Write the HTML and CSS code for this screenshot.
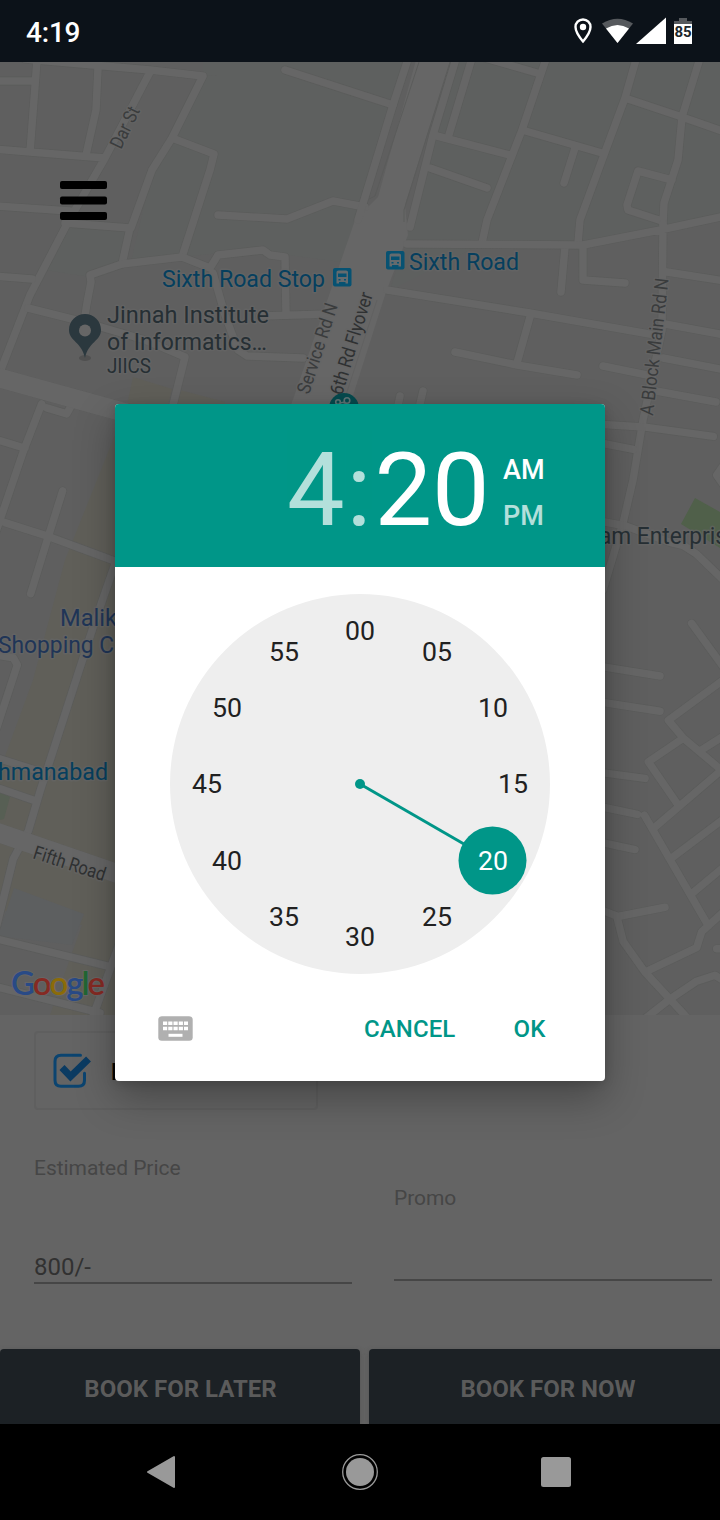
FILE: index.html
```html
<!DOCTYPE html>
<html lang="en">
<head>
<meta charset="utf-8">
<title>Book a ride</title>
<link rel="stylesheet" href="styles.css">
</head>
<body>
<div class="screen">
  <header class="status">
    <span class="status-time">4:19</span>
    <svg class="status-icons" width="124" height="30" viewBox="570 16 124 30">
      <path d="M583 19.500c-4.300 0-7.500 3.300-7.500 7.500 0 5.500 7.500 14.500 7.500 14.500s7.500-9 7.500-14.500c0-4.200-3.200-7.500-7.500-7.500z" fill="none" stroke="#fff" stroke-width="2.400"/>
      <circle cx="583" cy="27" r="3.200" fill="#fff"/>
      <path d="M602 23.500Q617.500 14 633 23.500L617.500 43z" fill="#56595d"/>
      <path d="M606 28.500Q617.500 21.500 629 28.500L617.500 43z" fill="#fff"/>
      <path d="M636 44L666 17.500V44z" fill="#fff"/>
      <path d="M679 18h8v3h5v4h-18v-4h5z" fill="#56595d"/>
      <path d="M674 24h18v20h-18z" fill="#fff"/>
      <text x="683" y="37" class="battery" text-anchor="middle" textLength="17">85</text>
    </svg>
  </header>

  <main class="map">
    <svg width="720" height="953" viewBox="0 62 720 953">
      <defs>
        <g id="roads" fill="none" stroke-linecap="round" stroke-linejoin="round">
          <path d="M25 59L150 70L203 76L172 138L152 170L131 228M37 60L30 152M-5 81H34M98 68L96 110L86 155M-5 149L30 152L105 158M150 72L105 158L68 222L30 295L-5 385M-5 206L70 211M65 223L130 228L122 264M172 138L214 154L210 170L182 257M218 215L287 219L333 201L365 207M285 70L393 105"/>
          <path d="M84 322L87 303L91 282L90 275L122 264L182 257L210 268L218 255L263 250L270 255L285 257L286 314M213 273L225 315L238 350L247 356L303 358M260 316L330 314M-5 276L32 279M28 308L84 322L145 340L185 357L173 405"/>
          <path d="M407 62L393 105L358 220M455 62L433 135L410 227M472 58L448 138M433 135L510 155M485 58L537 73M547 56L522 130L487 220L482 243M430 168L487 188M522 130L602 153M575 148L564 183M637 56L625 98L605 152L580 220L578 243M625 98L682 117L725 132M700 58L682 117L678 160L664 203L663 224M672 180L638 171L627 205L628 210L662 221"/>
          <path d="M407 244L583 245L660 230L725 216M583 245V280L625 283M565 247L561 292M663 224L662 330L643 420L633 480L623 523L603 590M387 290L530 313L655 335M530 317L517 363M455 352L517 365L577 375M603 366L647 375M667 272L725 281M665 324L725 335M663 358L725 370M656 391L716 402M423 391L415 425M400 396L395 420"/>
          <g transform="translate(0 400) scale(.3333 .3954)">
            <path d="M125 10L70 130L-15 340M-10 100L75 122M140 20L200 35L220 5M188 230L145 345L92 490M15 310L145 345L360 412M345 415L285 560L120 990L85 1090L40 1160L-10 1330M-10 645L40 652L52 670L-10 830M-10 905L140 945M-10 980L110 1015M-10 1363L330 1433M-10 1484L300 1550M360 1370L270 1580"/>
            <path class="wide" d="M-20 1090L360 1200"/>
          </g>
          <g transform="translate(600 400) scale(.3333 .3954)">
            <path d="M10 62L130 68L340 92M10 110L100 125M10 308L75 318L210 360L250 368L290 390L370 455M275 565L370 675M375 705L205 810L250 855L370 940M250 855L145 915L235 1025M370 850L305 885M370 932L165 1080M133 1050L325 1330M370 1060L220 1155M370 1182L280 1245M370 1295L305 1345L290 1385L135 1447M10 1292L50 1305L70 1370L135 1447L270 1570M10 675L180 698M10 765L180 787M10 943L135 957M10 1030L112 1048M10 1120L105 1137M50 1307L195 1283M130 1568L210 1515L290 1470L345 1455L370 1468M350 1388H370M375 160L350 190L375 220"/>
          </g>
          <path class="wide" d="M-15 374L130 414"/>
        </g>
      </defs>
      <path fill="#5f5f5f" d="M0 62h720v953H0z"/>
      <path fill="#5e605f" d="M203 76L150 180L131 262L250 250L340 262L358 220L410 62ZM203 76L410 62ZM203 76V62H410ZM455 62L410 227L385 290L407 245H583L720 217V62ZM68 225L130 228L122 264L90 277L45 270ZM403 247L480 245L390 290Z"/>
      <path fill="#605f59" d="M115 435L65 560L33 680L0 770V910L82 925L50 1015H115ZM133 377L172 389L168 405H127ZM180 390L225 402V405H176Z"/>
      <path fill="#5d5f60" d="M14 888L84 914L72 945L-2 936Z"/>
      <path fill="#575f54" d="M0 790L10 797L4 819L0 820Z"/>
      <path fill="#50604a" d="M695 498L720 512V548L681 524Z"/>
      <use href="#roads" class="road-edge"/>
      <path class="flyover" d="M416 60H451L405 205L408 235L386 292L350 405H291L355 220L378 197Z"/>
      <use href="#roads" class="road-fill"/>
      <path d="M419 62L375 196L369 199M450 62L404 210V222" fill="none" stroke="#5b5c5b"/>
      <path d="M377 300L343 404" stroke="#616161"/>

      <g class="labels">
        <text class="street" transform="translate(121 150) rotate(-64)" textLength="44" lengthAdjust="spacingAndGlyphs">Dar St</text>
        <text class="street" transform="translate(309 395) rotate(-72)" textLength="94" lengthAdjust="spacingAndGlyphs">Service Rd N</text>
        <text class="street dark" transform="translate(342 396) rotate(-73)" textLength="106" lengthAdjust="spacingAndGlyphs">6th Rd Flyover</text>
        <text class="street" transform="translate(653 416) rotate(-83.500)" textLength="138" lengthAdjust="spacingAndGlyphs">A Block Main Rd N</text>
        <text class="street dark" transform="translate(32 858) rotate(18)" textLength="75" lengthAdjust="spacingAndGlyphs">Fifth Road</text>
        <text class="transit" x="162" y="286.500" textLength="163" lengthAdjust="spacingAndGlyphs">Sixth Road Stop</text>
        <text class="transit" x="409" y="269.500" textLength="110" lengthAdjust="spacingAndGlyphs">Sixth Road</text>
        <text class="transit" x="-2" y="779.500" textLength="110" lengthAdjust="spacingAndGlyphs">hmanabad</text>
        <text class="shop" x="60" y="626" textLength="57" lengthAdjust="spacingAndGlyphs">Malik</text>
        <text class="shop" x="-2" y="653" textLength="116" lengthAdjust="spacingAndGlyphs">Shopping C</text>
        <text class="place" x="107" y="323" textLength="162" lengthAdjust="spacingAndGlyphs">Jinnah Institute</text>
        <text class="place" x="107" y="350" textLength="160" lengthAdjust="spacingAndGlyphs">of Informatics…</text>
        <text class="place small" x="107" y="373" textLength="44" lengthAdjust="spacingAndGlyphs">JIICS</text>
        <text class="place" x="599" y="543.500" textLength="128" lengthAdjust="spacingAndGlyphs">am Enterpris</text>
      </g>

      <g id="bus">
        <rect x="333" y="268" width="18.500" height="18.500" rx="2" fill="#075272"/>
        <path d="M336.500 283.500V272q0-1.500 2-1.500h7.500q2 0 2 1.500v11.500h-2.500v-1.500h-6.500v1.500z" fill="#656b6e"/>
        <path d="M338 273.500h8.500v3.500H338zM338.500 279h2v1.500h-2zM344 279h2v1.500h-2z" fill="#075272"/>
      </g>
      <use href="#bus" x="53" y="-17"/>

      <ellipse cx="85" cy="358" rx="6" ry="3" fill="#505050"/>
      <path d="M85 314c-9 0-16 7-16 16 0 11 13 12 16 28 3-16 16-17 16-28C101 321 94 314 85 314z" fill="#2b383e"/>
      <circle cx="85" cy="330.500" r="6" fill="#666"/>
      <circle cx="344" cy="408" r="15" fill="#064a4e"/>
      <circle cx="338" cy="402" r="2.300" class="loop"/>
      <circle cx="347" cy="400.500" r="2.800" class="loop"/>
      <path d="M340 403l5-1M342 406q3-4 6 0" class="loop"/>

      <g fill="#000">
        <rect x="60" y="181" width="47" height="8" rx="2"/>
        <rect x="60" y="196.500" width="47" height="8" rx="2"/>
        <rect x="60" y="212" width="47" height="8" rx="2"/>
      </g>

      <text class="google" x="11" y="995" textLength="94"><tspan fill="#294a86">G</tspan><tspan fill="#852a23">o</tspan><tspan fill="#8b6b09">o</tspan><tspan fill="#294a86">g</tspan><tspan fill="#216733">l</tspan><tspan fill="#852a23">e</tspan></text>
    </svg>
  </main>

  <section class="booking">
    <div class="option">
      <svg width="40" height="36" viewBox="0 0 40 36">
        <path d="M27.500 2.300H8Q2 2.300 2 8.300v19q0 6 6 6h17.500q6 0 6-6v-7" fill="none" stroke="#0b4470" stroke-width="3" stroke-linecap="round"/>
        <path d="M9 14.500L17.500 23.500 35.500 6" fill="none" stroke="#0b3b62" stroke-width="7"/>
      </svg>
      <span class="option-name">L</span>
    </div>
    <div class="fields">
      <div class="field price">
        <span class="field-label">Estimated Price</span>
        <span class="field-value">800/-</span>
      </div>
      <div class="field promo">
        <span class="field-label">Promo</span>
      </div>
    </div>
    <div class="actions">
      <div class="action">BOOK FOR LATER</div>
      <div class="action now">BOOK FOR NOW</div>
    </div>
  </section>

  <nav class="navbar">
    <svg width="720" height="96" viewBox="0 0 720 96" fill="#999">
      <path d="M148 48L174 33V63z" stroke="#999" stroke-width="2" stroke-linejoin="round"/>
      <circle cx="360" cy="48" r="14"/>
      <circle cx="360" cy="48" r="17.300" fill="none" stroke="#999" stroke-width="1.300"/>
      <rect x="541" y="33" width="30" height="30" rx="2.500"/>
    </svg>
  </nav>

  <div class="dialog">
    <div class="dialog-head">
      <div class="time"><span class="faded">4</span><span class="faded colon">:</span><span>20</span></div>
      <div class="ampm"><span>AM</span><span class="faded">PM</span></div>
    </div>
    <div class="dial">
      <svg width="380" height="380" viewBox="-190 -190 380 380">
        <circle r="190" fill="#eee"/>
        <path d="M0 0L132.500 76.500" stroke="#009688" stroke-width="3"/>
        <circle r="5" fill="#009688"/>
        <circle cx="132.500" cy="76.500" r="34" fill="#009688"/>
        <g class="numbers">
          <text x="0" y="-144">00</text>
          <text x="77" y="-123">05</text>
          <text x="133" y="-67">10</text>
          <text x="153" y="9">15</text>
          <text x="133" y="86" fill="#fff">20</text>
          <text x="77" y="142">25</text>
          <text x="0" y="162">30</text>
          <text x="-76" y="142">35</text>
          <text x="-133" y="86">40</text>
          <text x="-153" y="9">45</text>
          <text x="-133" y="-67">50</text>
          <text x="-76" y="-123">55</text>
        </g>
      </svg>
    </div>
    <div class="dialog-foot">
      <svg width="35" height="25" viewBox="0 0 35 25">
        <rect x=".3" y=".3" width="34.400" height="24.400" rx="3.500" fill="#b0b0b0"/>
        <path d="M5 7.300H30M5 12.500H30" stroke="#fff" stroke-width="3.600" stroke-dasharray="4.200 1.050"/>
        <path d="M10.500 19.300H24.500" stroke="#fff" stroke-width="3"/>
      </svg>
      <span class="cancel">CANCEL</span>
      <span class="ok">OK</span>
    </div>
  </div>
</div>
</body>
</html>
```
FILE: styles.css
```css
body { margin: 0; font-family: Roboto, sans-serif; }
svg { display: block; }
.screen { position: relative; display: flex; flex-direction: column; width: 720px; height: 1520px; overflow: hidden; background: #646464; }

.status { display: flex; justify-content: space-between; align-items: center; height: 62px; padding: 0 26px; box-sizing: border-box; background: #0c1219; color: #fff; }
.status-time { font-size: 28px; font-weight: 500; line-height: 62px; padding-top: 3px; letter-spacing: -.2px; }
.status-icons { width: 124px; }
.battery { font-size: 15px; font-weight: 700; fill: #20262b; }

.map { height: 953px; overflow: hidden; }
.map path { vector-effect: non-scaling-stroke; }
.road-edge { stroke: #5b5c5b; stroke-width: 8.8px; }
.road-edge .wide { stroke-width: 20px; }
.road-fill { stroke: #666; stroke-width: 7.5px; }
.wide { stroke-width: 19px; }
.flyover { fill: #666; }
.loop { fill: none; stroke: #5f7475; stroke-width: 1.6px; }
.labels text { paint-order: stroke; stroke: #656565; stroke-opacity: .7; stroke-width: 3px; stroke-linejoin: round; font-size: 24px; }
.labels .street { font-size: 19px; fill: #3a3c3d; }
.labels .street.dark { fill: #2f3132; }
.labels .transit { fill: #063f5e; }
.labels .shop { fill: #203557; }
.labels .place { fill: #262f34; }
.labels .small { font-size: 19.5px; }
.google { font-family: Lato, sans-serif; font-size: 33px; font-weight: 600; paint-order: stroke; stroke: #666; stroke-width: 2px; }

.booking { display: flex; flex-direction: column; height: 409px; background: #646464; }
.option { display: flex; align-items: center; gap: 18px; width: 284px; height: 79px; margin: 16px 0 0 34px; padding-left: 17px; box-sizing: border-box; border: 2px solid #5f5f5f; border-radius: 4px; }
.option-name { font-size: 24px; font-weight: 700; color: #050505; padding-top: 3px; }
.fields { display: flex; gap: 42px; padding-left: 34px; height: 239px; }
.field { display: flex; flex-direction: column; justify-content: space-between; width: 318px; flex: none; box-sizing: border-box; }
.price { height: 174px; padding-top: 46px; border-bottom: 2px solid #464646; }
.promo { height: 171px; padding-top: 76px; border-bottom: 2px solid #464646; }
.field-label { font-size: 21px; line-height: 25px; letter-spacing: -.05px; color: #464646; }
.field-value { font-size: 24px; line-height: 28px; padding-bottom: 1px; color: #313131; }
.actions { display: flex; gap: 9px; height: 75px; }
.action { flex: 0 0 360px; display: flex; align-items: center; justify-content: center; box-sizing: border-box; padding: 4px 0 0 1px; border-radius: 4px 4px 0 0; background: #1c2125; box-shadow: 0 2px 5px #4448; font-size: 24px; font-weight: 700; color: #5b5b5b; }
.action.now { padding-left: 0; padding-right: 2px; }
.navbar { height: 96px; background: #000; }

.dialog { position: absolute; left: 115px; top: 404px; width: 490px; height: 677px; border-radius: 4px; overflow: hidden; background: #fff; box-shadow: 0 16px 40px rgba(0,0,0,.3), 0 2px 10px rgba(0,0,0,.15); }
.dialog-head { display: flex; height: 163px; padding-left: 172px; box-sizing: border-box; background: #009688; color: #fff; }
.time { display: flex; width: 204px; padding-top: 26px; font-size: 102.5px; line-height: 120px; }
.colon { padding: 0 3px 0 2px; }
.faded { opacity: .7; }
.ampm { display: flex; flex-direction: column; padding: 43px 0 0 12px; font-size: 27px; font-weight: 500; line-height: 46px; }
.dial { display: flex; justify-content: center; padding-top: 27px; }
.numbers { font-size: 26.7px; text-anchor: middle; fill: #212121; }
.dialog-foot { display: flex; align-items: center; height: 54px; padding: 27px 0 0 43px; color: #009688; font-size: 24px; font-weight: 500; }
.dialog-foot span { padding-top: 2px; }
.cancel { margin: 0 58px 0 171px; letter-spacing: .1px; }
.ok { letter-spacing: .3px; }
```
